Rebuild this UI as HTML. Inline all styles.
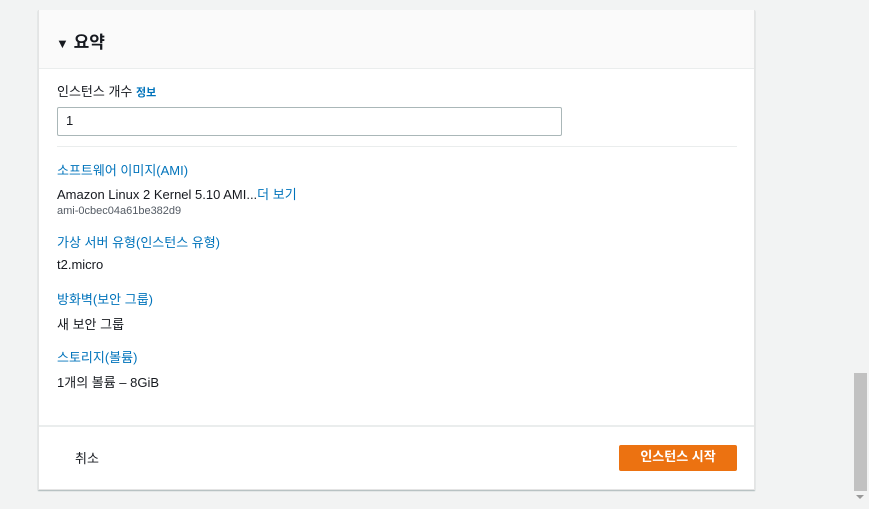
<!DOCTYPE html>
<html><head><meta charset="utf-8"><style>
body{margin:0;width:869px;height:509px;background:#f2f3f3;font-family:"Liberation Sans","Noto Sans CJK KR",sans-serif;position:relative;overflow:hidden;font-size:13px;color:#16191f}
.card{position:absolute;left:38px;top:10px;width:715px;height:479px;background:#fff;border:1px solid #e4e4e4;border-top:none;box-shadow:0 1px 1px #aab7b8}
.hdr{height:58px;background:#fafafa;border-bottom:1px solid #eaeded;position:relative}
.hdr .t{position:absolute;left:17px;top:18px;font-size:17px;font-weight:bold;color:#16191f}
.a{position:absolute;left:18px;font-size:13px}
.link{color:#0073bb}
.inp{position:absolute;left:18px;top:97px;width:503px;height:27px;border:1px solid #aab7b8;border-radius:2px}
.inp span{position:absolute;left:8px;top:5px}
.sep{position:absolute;left:18px;width:680px;height:1px;background:#eaeded}
.btn{position:absolute;left:580px;top:435px;width:118px;height:26px;background:#ec7211;border-radius:2px;color:#fff;font-weight:bold;text-align:center;line-height:24px}
.sb{position:absolute;left:854px;top:373px;width:13px;height:118px;background:#c1c1c1}
</style></head><body>
<div class="card">
<div class="hdr"><div class="t"><span style="font-size:13px">▼</span> 요약</div></div>
<div class="a" style="top:71px">인스턴스 개수 <span class="link" style="font-size:11px;font-weight:bold">정보</span></div>
<div class="inp"><span>1</span></div>
<div class="sep" style="top:136px"></div>
<div class="a link" style="top:150px">소프트웨어 이미지(AMI)</div>
<div class="a" style="top:174px">Amazon Linux 2 Kernel 5.10 AMI...<span class="link">더 보기</span></div>
<div class="a" style="top:195px;font-size:11px;color:#545b64">ami-0cbec04a61be382d9</div>
<div class="a link" style="top:222px">가상 서버 유형(인스턴스 유형)</div>
<div class="a" style="top:247px">t2.micro</div>
<div class="a link" style="top:279px">방화벽(보안 그룹)</div>
<div class="a" style="top:304px">새 보안 그룹</div>
<div class="a link" style="top:337px">스토리지(볼륨)</div>
<div class="a" style="top:362px">1개의 볼륨 – 8GiB</div>
<div class="sep" style="top:415px;left:0;width:715px;height:2px"></div>
<div class="a" style="top:438px;left:36px">취소</div>
<div class="btn">인스턴스 시작</div>
</div>
<div class="sb"></div>
<div style="position:absolute;left:856px;top:495px;width:0;height:0;border-left:4px solid transparent;border-right:4px solid transparent;border-top:4px solid #999"></div>
</body></html>
